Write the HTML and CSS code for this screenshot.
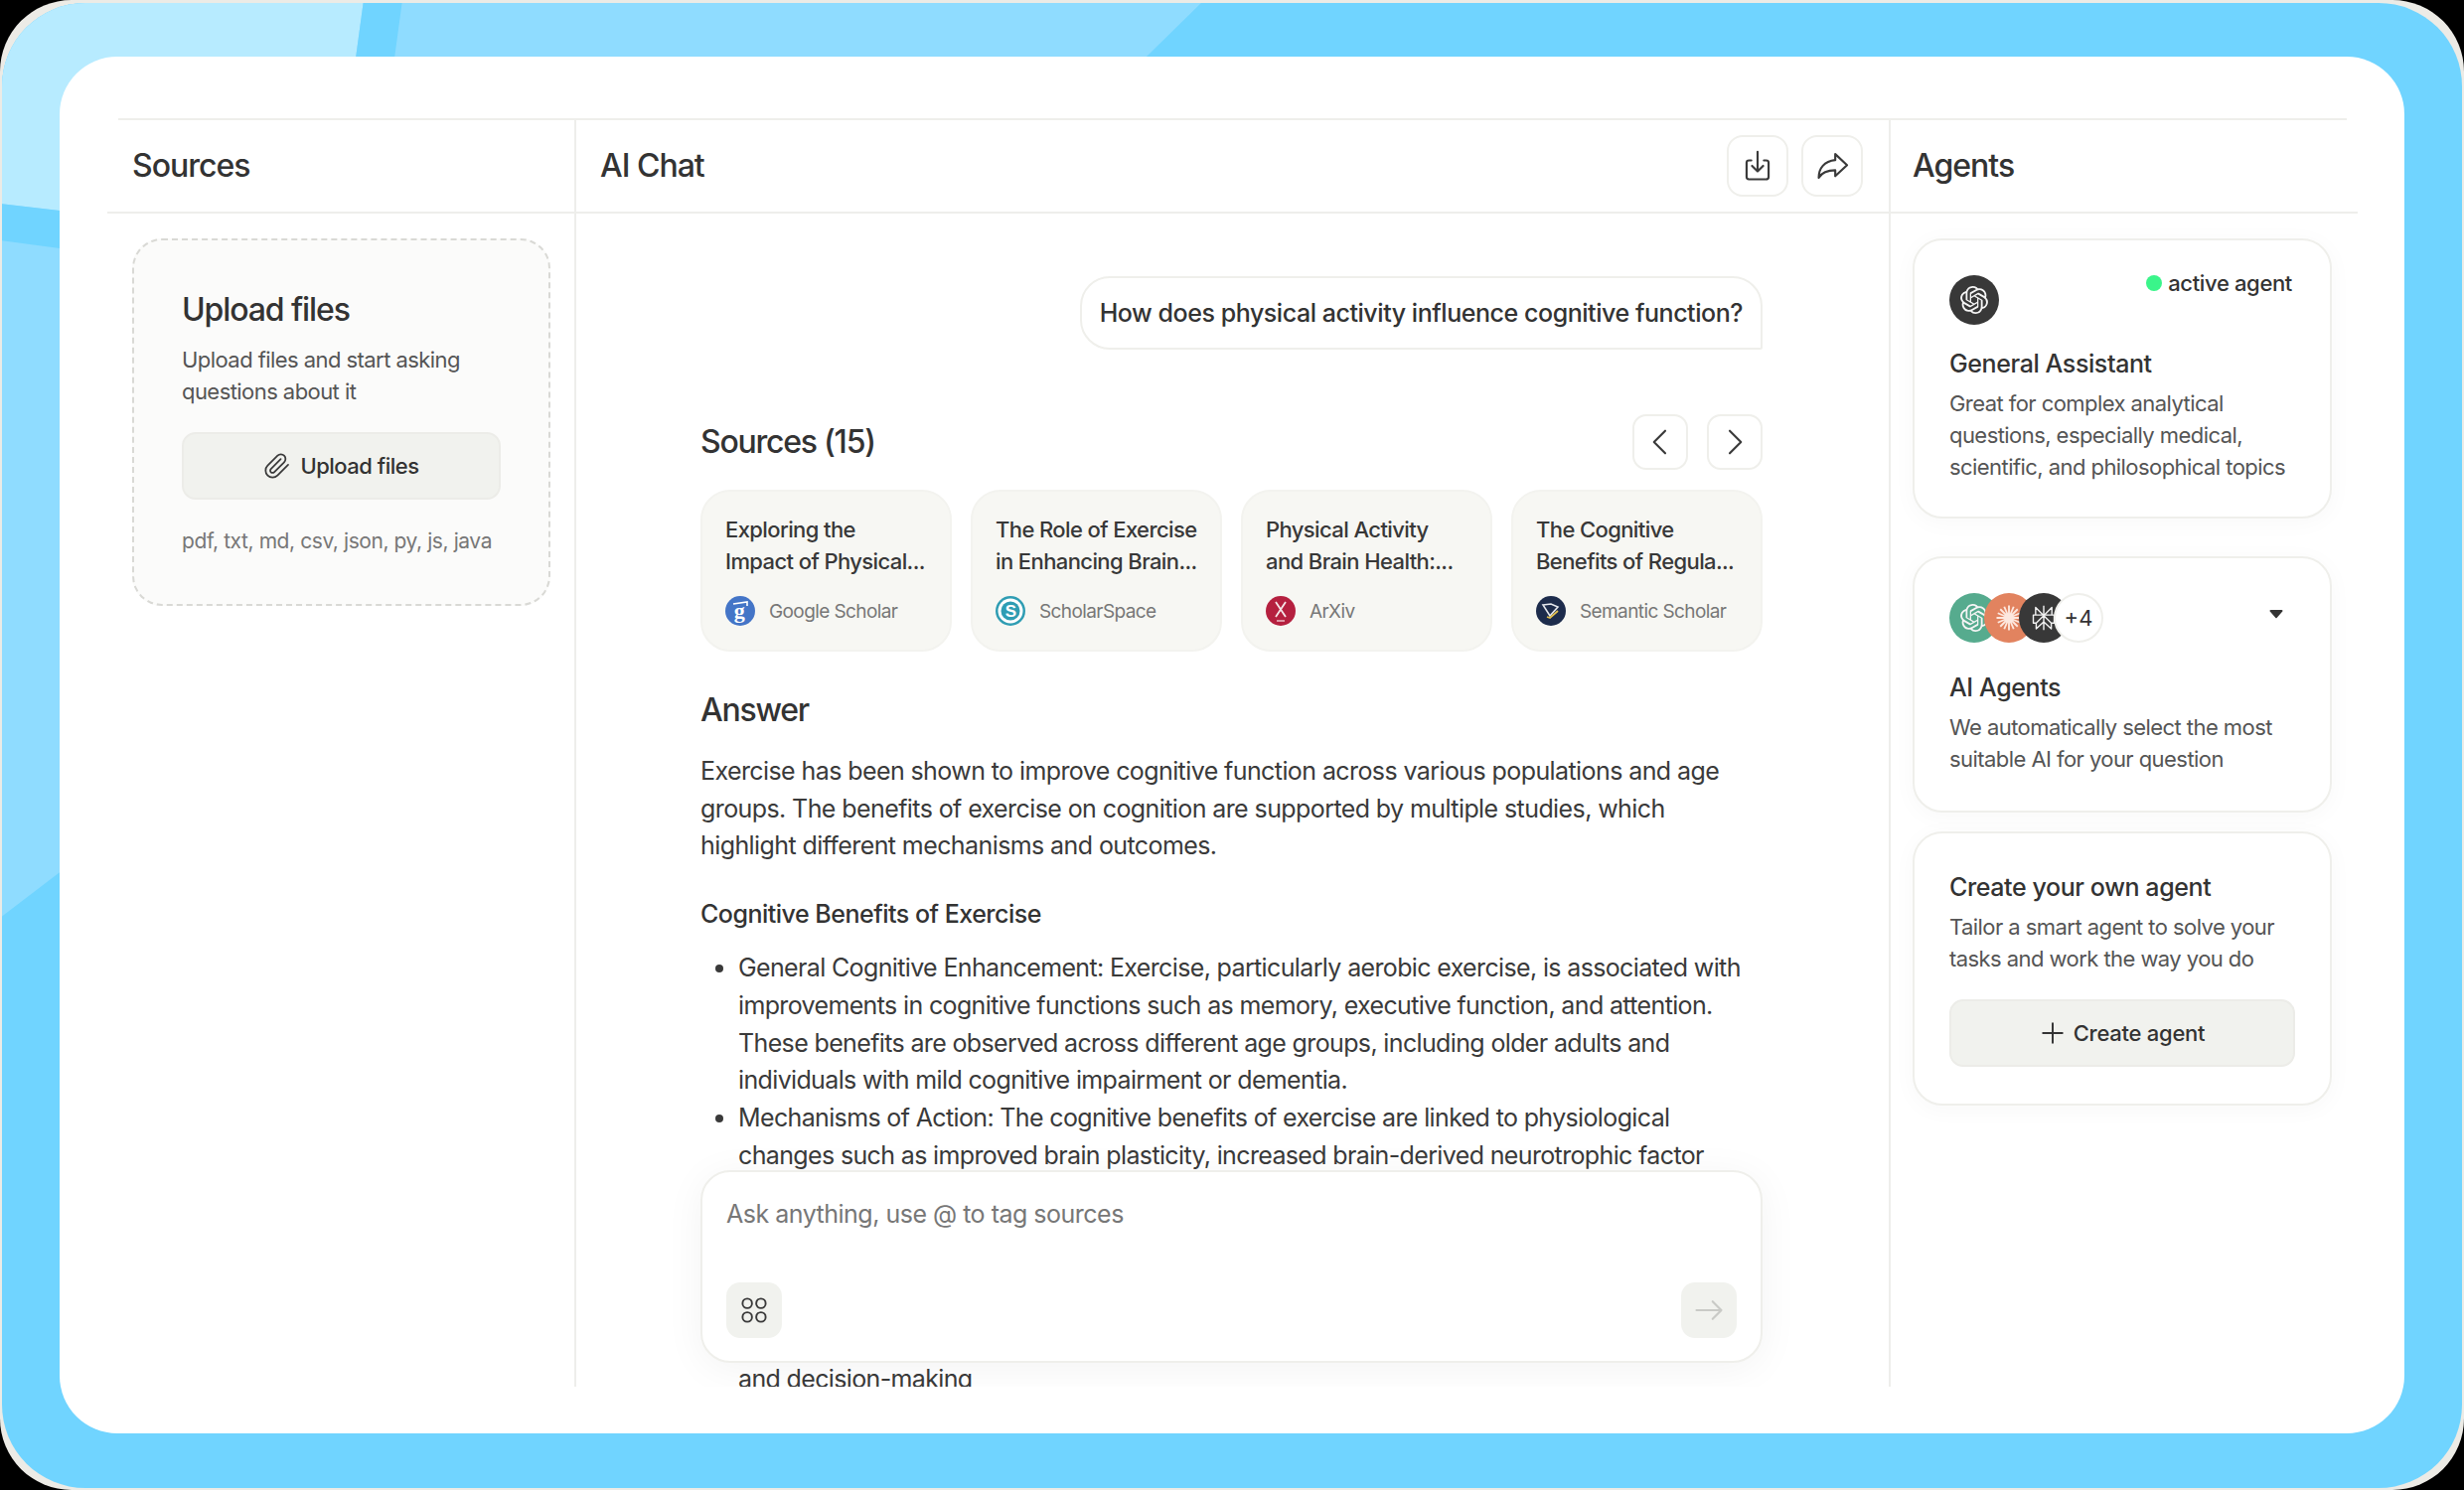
FILE: index.html
```html
<!DOCTYPE html>
<html lang="en">
<head>
<meta charset="utf-8">
<title>AI Chat</title>
<link rel="stylesheet" href="styles.css">
</head>
<body>
<div class="window">
  <div class="frame">
    <svg class="backdrop" width="2480" height="1500" viewBox="0 0 2480 1500" aria-hidden="true">
      <polygon points="0,0 1212,0 1100,110 110,110 110,840 0,924" fill="#8fdcff"/>
      <polygon points="0,0 366,0 351,110 120,110 120,219 0,205" fill="#b7ebff"/>
      <polygon points="366,0 405,0 390,110 351,110" fill="#70d4ff"/>
      <polygon points="0,205 120,219 120,258 0,242" fill="#70d4ff"/>
    </svg>
    <main class="card">
      <div class="topline"></div>
      <div class="columns">
        <section class="col">
          <header class="col-head"><h2 class="panel-title">Sources</h2></header>
          <div class="col-body sources-body">
            <div class="upload">
              <h3 class="upload-title">Upload files</h3>
              <p class="desc upload-desc">Upload files and start asking questions about it</p>
              <button class="soft-btn upload-btn">
                <svg class="icon-clip" viewBox="0 0 24 24"><path d="M21.44 11.05l-9.19 9.19a6 6 0 0 1-8.49-8.49l8.57-8.57A4 4 0 1 1 18 8.84l-8.59 8.57a2 2 0 0 1-2.83-2.83l8.49-8.48"/></svg>
                Upload files
              </button>
              <p class="formats">pdf, txt, md, csv, json, py, js, java</p>
            </div>
          </div>
        </section>

        <section class="col col-line">
          <header class="col-head chat-head">
            <h2 class="panel-title">AI Chat</h2>
            <div class="head-actions">
              <button class="icon-btn"><svg class="icon icon-lg" viewBox="0 0 24 24"><path d="M8 8.500H6.500A1.500 1.500 0 0 0 5 10v9a1.500 1.500 0 0 0 1.500 1.500h11A1.500 1.500 0 0 0 19 19v-9a1.500 1.500 0 0 0-1.500-1.500H16M12 3v12.500M8.500 12l3.500 3.500 3.500-3.500"/></svg></button>
              <button class="icon-btn"><svg class="icon icon-lg" viewBox="0 0 24 24"><path d="M14 4.500l7.500 7-7.500 7v-3.700c-5 0-8.300 1.200-10.500 4.700C3.500 13.500 7 9 14 8.300z"/></svg></button>
            </div>
          </header>
          <div class="col-body chat-body">
            <div class="bubble-row"><div class="bubble">How does physical activity influence cognitive function?</div></div>

            <div class="sources-head">
              <h3 class="section-title">Sources (15)</h3>
              <div class="nav-btns">
                <button class="nav-btn"><svg class="icon" viewBox="0 0 24 24"><path d="M16 3l-9 9 9 9"/></svg></button>
                <button class="nav-btn"><svg class="icon" viewBox="0 0 24 24"><path d="M8 3l9 9-9 9"/></svg></button>
              </div>
            </div>

            <div class="source-grid">
              <article class="source">
                <p class="source-title">Exploring the<br>Impact of Physical...</p>
                <div class="source-meta">
                  <svg class="source-logo" viewBox="0 0 30 30"><circle cx="15" cy="15" r="15" fill="#4475c7"/><text x="14" y="22" class="logo-g">g</text><path d="M8 8l14-2v4" fill="none" stroke="#fff" stroke-width="1.600"/></svg>
                  <span>Google Scholar</span>
                </div>
              </article>
              <article class="source">
                <p class="source-title">The Role of Exercise<br>in Enhancing Brain...</p>
                <div class="source-meta">
                  <svg class="source-logo" viewBox="0 0 30 30"><circle cx="15" cy="15" r="15" fill="#2f9db3"/><circle cx="15" cy="15" r="12.500" fill="#fff"/><circle cx="15" cy="15" r="9.500" fill="#2f9db3"/><text x="15" y="21" class="logo-s">S</text></svg>
                  <span>ScholarSpace</span>
                </div>
              </article>
              <article class="source">
                <p class="source-title">Physical Activity<br>and Brain Health:...</p>
                <div class="source-meta">
                  <svg class="source-logo" viewBox="0 0 30 30"><circle cx="15" cy="15" r="15" fill="#b5203f"/><path d="M10 6l10 15M20 6L10 21" fill="none" stroke="#f5e6e8" stroke-width="1.800"/><path d="M11 25h8" stroke="#f0c9d0" stroke-width="1.400"/></svg>
                  <span>ArXiv</span>
                </div>
              </article>
              <article class="source">
                <p class="source-title">The Cognitive<br>Benefits of Regula...</p>
                <div class="source-meta">
                  <svg class="source-logo" viewBox="0 0 30 30"><circle cx="15" cy="15" r="15" fill="#1d2c4c"/><path d="M7 9l8-1 7 3-8 9z" fill="none" stroke="#e6e9ef" stroke-width="1.600"/><path d="M11 21l3 1 8-7" fill="none" stroke="#e2c04f" stroke-width="1.800"/></svg>
                  <span>Semantic Scholar</span>
                </div>
              </article>
            </div>

            <h3 class="section-title answer-title">Answer</h3>
            <p class="answer-text">Exercise has been shown to improve cognitive function across various populations and age groups. The benefits of exercise on cognition are supported by multiple studies, which highlight different mechanisms and outcomes.</p>
            <h4 class="answer-sub">Cognitive Benefits of Exercise</h4>
            <ul class="answer-list">
              <li>General Cognitive Enhancement: Exercise, particularly aerobic exercise, is associated with improvements in cognitive functions such as memory, executive function, and attention. These benefits are observed across different age groups, including older adults and individuals with mild cognitive impairment or dementia.</li>
              <li>Mechanisms of Action: The cognitive benefits of exercise are linked to physiological changes such as improved brain plasticity, increased brain-derived neurotrophic factor</li>
              <li class="list-tail">and decision-making</li>
            </ul>

            <div class="composer">
              <div class="placeholder">Ask anything, use @ to tag sources</div>
              <div class="composer-tools">
                <button class="tool-btn"><svg class="icon icon-grid" viewBox="0 0 24 24"><circle cx="6.500" cy="6.500" r="3.800"/><circle cx="17.500" cy="6.500" r="3.800"/><circle cx="6.500" cy="17.500" r="3.800"/><circle cx="17.500" cy="17.500" r="3.800"/></svg></button>
                <button class="tool-btn send"><svg class="icon" viewBox="0 0 24 24"><path d="M2 12h20M15 5l7 7-7 7"/></svg></button>
              </div>
            </div>
          </div>
        </section>

        <section class="col col-line">
          <header class="col-head agents-head"><h2 class="panel-title">Agents</h2></header>
          <div class="col-body agents-body">
            <article class="agent agent-general">
              <div class="agent-top">
                <span class="avatar avatar-dark">
                  <svg class="knot" viewBox="0 0 24 24"><path d="M22.2819 9.8211a5.9847 5.9847 0 0 0-.5157-4.9108 6.0462 6.0462 0 0 0-6.5098-2.9A6.0651 6.0651 0 0 0 4.9807 4.1818a5.9847 5.9847 0 0 0-3.9977 2.9 6.0462 6.0462 0 0 0 .7427 7.0966 5.98 5.98 0 0 0 .511 4.9107 6.051 6.051 0 0 0 6.5146 2.9001A5.9847 5.9847 0 0 0 13.2599 24a6.0557 6.0557 0 0 0 5.7718-4.2058 5.9894 5.9894 0 0 0 3.9977-2.9001 6.0557 6.0557 0 0 0-.7475-7.0729zm-9.022 12.6081a4.4755 4.4755 0 0 1-2.8764-1.0408l.1419-.0804 4.7783-2.7582a.7948.7948 0 0 0 .3927-.6813v-6.7369l2.02 1.1686a.071.071 0 0 1 .038.052v5.5826a4.504 4.504 0 0 1-4.4945 4.4944zm-9.6607-4.1254a4.4708 4.4708 0 0 1-.5346-3.0137l.142.0852 4.783 2.7582a.7712.7712 0 0 0 .7806 0l5.8428-3.3685v2.3324a.0804.0804 0 0 1-.0332.0615L9.74 19.9502a4.4992 4.4992 0 0 1-6.1408-1.6464zM2.3408 7.8956a4.485 4.485 0 0 1 2.3655-1.9728V11.6a.7664.7664 0 0 0 .3879.6765l5.8144 3.3543-2.0201 1.1685a.0757.0757 0 0 1-.071 0l-4.8303-2.7865A4.504 4.504 0 0 1 2.3408 7.872zm16.5963 3.8558L13.1038 8.364 15.1192 7.2a.0757.0757 0 0 1 .071 0l4.8303 2.7913a4.4944 4.4944 0 0 1-.6765 8.1042v-5.6772a.79.79 0 0 0-.407-.667zm2.0107-3.0231l-.142-.0852-4.7735-2.7818a.7759.7759 0 0 0-.7854 0L9.409 9.2297V6.8974a.0662.0662 0 0 1 .0284-.0615l4.8303-2.7866a4.4992 4.4992 0 0 1 6.6802 4.66zM8.3065 12.863l-2.02-1.1638a.0804.0804 0 0 1-.038-.0567V6.0742a4.4992 4.4992 0 0 1 7.3757-3.4537l-.142.0805L8.704 5.459a.7948.7948 0 0 0-.3927.6813zm1.0976-2.3654l2.602-1.4998 2.6069 1.4998v2.9994l-2.5974 1.4997-2.6067-1.4997Z"/></svg>
                </span>
                <span class="active"><i class="dot"></i>active agent</span>
              </div>
              <h3 class="agent-title">General Assistant</h3>
              <p class="desc">Great for complex analytical questions, especially medical, scientific, and philosophical topics</p>
            </article>

            <article class="agent agent-auto">
              <div class="agent-top">
                <div class="avatars">
                  <span class="avatar avatar-green">
                    <svg class="knot" viewBox="0 0 24 24"><path d="M22.2819 9.8211a5.9847 5.9847 0 0 0-.5157-4.9108 6.0462 6.0462 0 0 0-6.5098-2.9A6.0651 6.0651 0 0 0 4.9807 4.1818a5.9847 5.9847 0 0 0-3.9977 2.9 6.0462 6.0462 0 0 0 .7427 7.0966 5.98 5.98 0 0 0 .511 4.9107 6.051 6.051 0 0 0 6.5146 2.9001A5.9847 5.9847 0 0 0 13.2599 24a6.0557 6.0557 0 0 0 5.7718-4.2058 5.9894 5.9894 0 0 0 3.9977-2.9001 6.0557 6.0557 0 0 0-.7475-7.0729zm-9.022 12.6081a4.4755 4.4755 0 0 1-2.8764-1.0408l.1419-.0804 4.7783-2.7582a.7948.7948 0 0 0 .3927-.6813v-6.7369l2.02 1.1686a.071.071 0 0 1 .038.052v5.5826a4.504 4.504 0 0 1-4.4945 4.4944zm-9.6607-4.1254a4.4708 4.4708 0 0 1-.5346-3.0137l.142.0852 4.783 2.7582a.7712.7712 0 0 0 .7806 0l5.8428-3.3685v2.3324a.0804.0804 0 0 1-.0332.0615L9.74 19.9502a4.4992 4.4992 0 0 1-6.1408-1.6464zM2.3408 7.8956a4.485 4.485 0 0 1 2.3655-1.9728V11.6a.7664.7664 0 0 0 .3879.6765l5.8144 3.3543-2.0201 1.1685a.0757.0757 0 0 1-.071 0l-4.8303-2.7865A4.504 4.504 0 0 1 2.3408 7.872zm16.5963 3.8558L13.1038 8.364 15.1192 7.2a.0757.0757 0 0 1 .071 0l4.8303 2.7913a4.4944 4.4944 0 0 1-.6765 8.1042v-5.6772a.79.79 0 0 0-.407-.667zm2.0107-3.0231l-.142-.0852-4.7735-2.7818a.7759.7759 0 0 0-.7854 0L9.409 9.2297V6.8974a.0662.0662 0 0 1 .0284-.0615l4.8303-2.7866a4.4992 4.4992 0 0 1 6.6802 4.66zM8.3065 12.863l-2.02-1.1638a.0804.0804 0 0 1-.038-.0567V6.0742a4.4992 4.4992 0 0 1 7.3757-3.4537l-.142.0805L8.704 5.459a.7948.7948 0 0 0-.3927.6813zm1.0976-2.3654l2.602-1.4998 2.6069 1.4998v2.9994l-2.5974 1.4997-2.6067-1.4997Z"/></svg>
                  </span>
                  <span class="avatar avatar-orange">
                    <svg class="burst" viewBox="0 0 24 24"><path d="M12 2v20M2 12h20M5 5l14 14M5 19L19 5M8.200 3l7.600 18M15.800 3L8.200 21M3 8.200l18 7.600M3 15.800l18-7.600"/></svg>
                  </span>
                  <span class="avatar avatar-dark">
                    <svg class="perp" viewBox="0 0 24 24"><path d="M12 1.500v21M5 3l7 7 7-7v6.500H5zM5 9.500H3v7h2.500L12 10l6.500 6.500H21v-7h-2M5.500 16.500v5l6.500-6 6.500 6v-5"/></svg>
                  </span>
                  <span class="avatar avatar-more">+4</span>
                </div>
                <svg class="caret" viewBox="0 0 14 10"><path d="M1.500 1h11a1 1 0 0 1 .8 1.600L7.800 8.700a1 1 0 0 1-1.600 0L.7 2.600A1 1 0 0 1 1.500 1z"/></svg>
              </div>
              <h3 class="agent-title">AI Agents</h3>
              <p class="desc">We automatically select the most suitable AI for your question</p>
            </article>

            <article class="agent agent-create">
              <h3 class="agent-title">Create your own agent</h3>
              <p class="desc">Tailor a smart agent to solve your tasks and work the way you do</p>
              <button class="soft-btn create-btn">
                <svg class="icon-plus" viewBox="0 0 24 24"><path d="M12 3v18M3 12h18"/></svg>
                Create agent
              </button>
            </article>
          </div>
        </section>
      </div>
    </main>
  </div>
</div>
</body>
</html>
```

FILE: styles.css
```css
* { box-sizing: border-box; }
html, body { margin: 0; padding: 0; background: #000; }
body { font-family: "Inter", "Liberation Sans", sans-serif; color: #333; width: 2480px; height: 1500px; overflow: hidden; }
h2, h3, h4, p, ul { margin: 0; padding: 0; }
button { font-family: inherit; color: inherit; cursor: pointer; }

.window {
  width: 2480px;
  height: 1500px;
  border-radius: 72px;
  background: #ecebe6;
  padding: 3px 2px 2px;
}
.frame {
  position: relative;
  height: 1495px;
  border-radius: 84px;
  overflow: hidden;
  background: #70d4ff;
  padding: 54px 58px 55px;
}
.backdrop { position: absolute; left: -2px; top: -3px; }

.card {
  position: relative;
  height: 1386px;
  background: #fff;
  border-radius: 58px;
  padding: 62px 47px 47px 48px;
}
.topline { height: 2px; margin: 0 11px; background: #eeeeeb; }
.columns { display: grid; grid-template-columns: 470px 1323px 472px; grid-template-rows: 1275px; height: 1275px; }
.col { display: flex; flex-direction: column; min-width: 0; min-height: 0; }
.col-line { border-left: 2px solid #eeeeeb; }
.col-head { height: 94px; flex: none; border-bottom: 2px solid #eeeeeb; display: flex; align-items: center; padding-left: 25px; }
.col-line .col-head { padding-left: 24px; }
.col-line .agents-head { padding-left: 22px; }
.col-body { flex: 1; min-height: 0; }
.panel-title { font-size: 32px; font-weight: 500; letter-spacing: -1px; line-height: 40px; color: #333; }

.chat-head { justify-content: space-between; padding-right: 26px; }
.head-actions { display: flex; gap: 13px; }
.icon-btn, .nav-btn, .tool-btn { display: flex; align-items: center; justify-content: center; padding: 0; background: #fff; border: 2px solid #efefeb; }
.icon-btn { width: 62px; height: 62px; border-radius: 16px; }
.icon { width: 30px; height: 30px; fill: none; stroke: #3a3a3a; stroke-width: 1.700; stroke-linecap: round; stroke-linejoin: round; }
.icon-lg { width: 38px; height: 38px; stroke-width: 1.350; }
.icon-grid { width: 30px; height: 30px; stroke-width: 1.500; }

.sources-body { padding: 25px 24px 0 25px; }
.upload { background: #fbfbfa; border: 2px dashed #d9d9d5; border-radius: 30px; padding: 51px 48px 47px; }
.upload-title { font-size: 32px; font-weight: 500; letter-spacing: -1.1px; line-height: 38px; }
.desc { font-size: 22px; line-height: 32px; color: #555; letter-spacing: -0.56px; }
.upload-desc { margin-top: 15px; }
.soft-btn { display: flex; align-items: center; justify-content: center; gap: 8px; height: 68px; width: 100%; background: #f1f2ee; border: 2px solid #ecece8; border-radius: 14px; font-size: 22px; font-weight: 500; letter-spacing: -0.25px; }
.upload-btn { margin-top: 25px; gap: 9px; letter-spacing: -0.5px; }
.icon-clip { width: 28px; height: 28px; fill: none; stroke: #3a3a3a; stroke-width: 1.500; stroke-linecap: round; stroke-linejoin: round; }
.formats { margin-top: 26px; font-size: 21px; line-height: 32px; color: #777; letter-spacing: -0.42px; white-space: nowrap; }

.chat-body { position: relative; overflow: hidden; padding: 63px 127px 0 125px; }
.bubble-row { display: flex; justify-content: flex-end; }
.bubble { height: 74px; display: flex; align-items: center; padding: 0 18px; border: 2px solid #efefeb; border-radius: 30px 30px 2px 30px; font-size: 25px; font-weight: 500; letter-spacing: -0.45px; }
.sources-head { display: flex; justify-content: space-between; align-items: center; margin-top: 65px; }
.section-title { font-size: 32px; font-weight: 500; letter-spacing: -1.25px; line-height: 38px; }
.nav-btns { display: flex; gap: 19px; }
.nav-btn { width: 56px; height: 56px; border-radius: 14px; }
.source-grid { display: grid; grid-template-columns: repeat(4, 1fr); gap: 19px; margin-top: 20px; }
.source { height: 163px; background: #f7f7f3; border: 2px solid #f3f3ef; border-radius: 30px; padding: 22px 10px 0 23px; }
.source-title { font-size: 22px; line-height: 32px; font-weight: 500; color: #383838; letter-spacing: -0.6px; white-space: nowrap; }
.source-meta { display: flex; align-items: center; gap: 14px; margin-top: 19px; font-size: 19px; color: #777; letter-spacing: -0.6px; }
.source-logo { width: 30px; height: 30px; flex: none; }
.logo-g { font-family: "Liberation Serif", serif; font-size: 22px; font-weight: 700; fill: #fff; text-anchor: middle; }
.logo-s { font-family: "Liberation Sans", sans-serif; font-size: 17px; font-weight: 700; fill: #fff; text-anchor: middle; }

.answer-title { margin-top: 40px; }
.answer-text { margin-top: 24px; font-size: 25px; line-height: 37.700px; color: #3a3a3a; letter-spacing: -0.59px; }
.answer-sub { margin-top: 30px; font-size: 25px; line-height: 38px; font-weight: 500; color: #333; letter-spacing: -0.5px; }
.answer-list { margin-top: 17px; padding-left: 38px; font-size: 25px; line-height: 37.700px; color: #3a3a3a; letter-spacing: -0.64px; }
.list-tail { list-style: none; margin-top: 188px; }

.composer { position: absolute; left: 125px; top: 963px; width: 1069px; height: 194px; background: #fff; border: 2px solid #efefeb; border-radius: 30px; padding: 25px 24px 23px; box-shadow: 0 6px 40px rgba(0,0,0,0.05); display: flex; flex-direction: column; justify-content: space-between; }
.placeholder { font-size: 25px; line-height: 34px; color: #777; letter-spacing: -0.5px; }
.composer-tools { display: flex; justify-content: space-between; }
.tool-btn { width: 56px; height: 56px; border-radius: 14px; background: #f1f2ee; border: 0; }
.send .icon { stroke: #c9cac6; }

.agents-body { padding: 25px 0 0 22px; width: 444px; }
.agent { background: #fff; border: 2px solid #efefeb; border-radius: 30px; padding: 35px 35px 34px; box-shadow: 0 4px 24px rgba(0,0,0,0.03); }
.agent-auto { margin-top: 38px; padding-bottom: 36px; }
.agent-create { margin-top: 19px; padding-top: 38px; padding-bottom: 37px; }
.agent-top { display: flex; justify-content: space-between; align-items: flex-start; }
.agent-title { font-size: 25px; line-height: 32px; font-weight: 500; color: #333; letter-spacing: -0.4px; }
.agent-general .agent-title { margin-top: 23px; }
.agent-auto .agent-title { margin-top: 29px; }
.agent-title + .desc { margin-top: 8px; }
.active { display: flex; align-items: center; gap: 6px; font-size: 22px; line-height: 32px; font-weight: 500; color: #333; letter-spacing: -0.35px; margin: -8px 3px 0 0; }
.dot { width: 16px; height: 16px; border-radius: 50%; background: #3af58a; }
.avatar { width: 50px; height: 50px; border-radius: 50%; display: flex; align-items: center; justify-content: center; flex: none; }
.avatar-dark { background: #383838; }
.avatar-green { background: #56ab8e; }
.avatar-orange { background: #e2835f; }
.avatar-more { background: #fff; border: 2px solid #efefeb; font-size: 22px; color: #333; }
.avatars { display: flex; }
.avatars .avatar + .avatar { margin-left: -15px; }
.avatars .avatar-more { position: relative; }
.knot { width: 28px; height: 28px; fill: #f4f4f4; }
.burst { width: 30px; height: 30px; fill: none; stroke: #fde8df; stroke-width: 1.500; }
.perp { width: 28px; height: 32px; fill: none; stroke: #f2f2f2; stroke-width: 1.200; stroke-linejoin: round; }
.caret { width: 14px; height: 10px; fill: #333; margin-top: 16px; margin-right: 12px; }
.create-btn { margin-top: 25px; }
.icon-plus { width: 26px; height: 26px; fill: none; stroke: #333; stroke-width: 1.800; stroke-linecap: round; }
```
